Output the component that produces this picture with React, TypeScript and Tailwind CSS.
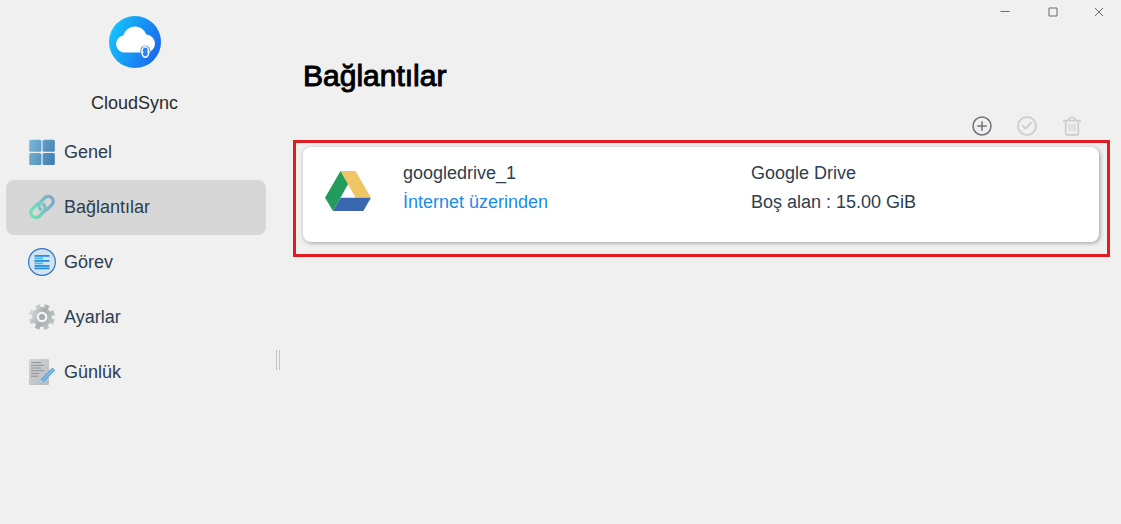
import { Check } from "lucide-react";

function CloudLogo() {
  return (
    <svg viewBox="0 0 52 52" className="size-[52px]" aria-hidden="true">
      <defs>
        <linearGradient id="logo" x1="0" y1="0.3" x2="1" y2="0.7">
          <stop offset="0" stopColor="#15c4fb" />
          <stop offset="1" stopColor="#1a66ee" />
        </linearGradient>
      </defs>
      <circle cx="26" cy="26" r="26" fill="url(#logo)" />
      <path
        d="M15.5 36.5a8.5 8.5 0 0 1-1.2-16.9A12 12 0 0 1 37.3 18.6a9 9 0 0 1 1 17.9z"
        fill="#fff"
      />
      <ellipse cx="36.3" cy="36" rx="5" ry="6.6" fill="#2a86ee" />
      <ellipse cx="36.3" cy="36" rx="3.4" ry="5.2" fill="none" stroke="#fff" strokeWidth="1.6" />
      <path d="M32 34.2v3.6M40.600 34.200v3.600" stroke="#2a86ee" strokeWidth="0.8" />
      <path d="M31 36.600h4l-2-2.400zM41.600 35.400h-4l2 2.400z" fill="#fff" />
    </svg>
  );
}

function GridIcon() {
  return (
    <svg viewBox="0 0 28 28" className="size-7" aria-hidden="true">
      <defs>
        <linearGradient id="grid" gradientUnits="userSpaceOnUse" x1="1" y1="8" x2="27" y2="20">
          <stop offset="0" stopColor="#76b5d6" />
          <stop offset="1" stopColor="#427fb4" />
        </linearGradient>
      </defs>
      <g fill="url(#grid)">
        <rect x="1.2" y="1.7" width="12.2" height="12" rx="1.5" />
        <rect x="14.6" y="1.7" width="12.2" height="12" rx="1.5" />
        <rect x="1.2" y="15" width="12.2" height="12" rx="1.5" />
        <rect x="14.6" y="15" width="12.2" height="12" rx="1.5" />
      </g>
    </svg>
  );
}

function ChainIcon() {
  return (
    <svg viewBox="0 0 28 28" className="size-7" aria-hidden="true">
      <defs>
        <linearGradient id="chain" gradientUnits="userSpaceOnUse" x1="3" y1="16" x2="25" y2="12">
          <stop offset="0" stopColor="#72dfb8" />
          <stop offset="1" stopColor="#7ba9cb" />
        </linearGradient>
      </defs>
      <g fill="none" stroke="url(#chain)" strokeWidth="3.4" strokeLinecap="round">
        <path d="M12.6 16.4a5 5 0 0 1-.4-7l5-5a5 5 0 0 1 7 7l-4.500 4.500a4.600 4.600 0 0 1-1.500 1" />
        <path d="M15.400 11.600a5 5 0 0 1 .4 7l-5 5a5 5 0 0 1-7-7l4.500-4.500a4.600 4.600 0 0 1 1.500-1" />
      </g>
    </svg>
  );
}

function TaskIcon() {
  return (
    <svg viewBox="0 0 28 28" className="size-7" aria-hidden="true">
      <circle cx="14" cy="14" r="13.4" fill="#d5e3f1" stroke="#2a74cd" strokeWidth="1.2" />
      <g fill="#2590dc">
        <rect x="6.500" y="7" width="15" height="1.800" />
        <rect x="6.500" y="12" width="15" height="1.800" />
        <rect x="6.500" y="17" width="15" height="1.800" />
        <rect x="6.500" y="19.500" width="15" height="1.800" />
      </g>
      <g fill="#46baf2">
        <rect x="6.500" y="9.500" width="8.500" height="1.800" />
        <rect x="6.500" y="14.500" width="8.500" height="1.800" />
      </g>
    </svg>
  );
}

function GearIcon() {
  return (
    <svg viewBox="0 0 28 28" className="size-7" aria-hidden="true">
      <defs>
        <linearGradient id="gear" gradientUnits="userSpaceOnUse" x1="2" y1="10" x2="26" y2="18">
          <stop offset="0" stopColor="#d5d9d9" />
          <stop offset="0.5" stopColor="#a9b0b1" />
          <stop offset="1" stopColor="#bcc3c5" />
        </linearGradient>
      </defs>
      {/* the dashes on the outer stroke are the eight teeth */}
      <circle cx="14" cy="14" r="10" fill="url(#gear)" />
      <circle
        cx="14"
        cy="14"
        r="11"
        fill="none"
        stroke="url(#gear)"
        strokeWidth="4"
        strokeDasharray="4.64 4"
        transform="rotate(10.5 14 14)"
      />
      <circle cx="14" cy="14" r="4.2" fill="#a3adb0" stroke="#f3f4f4" strokeWidth="2.2" />
    </svg>
  );
}

function LogIcon() {
  return (
    <svg viewBox="0 0 28 28" className="size-7" aria-hidden="true">
      <defs>
        <linearGradient id="sheet" x1="0" y1="0" x2="1" y2="1">
          <stop offset="0" stopColor="#d2d4d6" />
          <stop offset="1" stopColor="#b9bcbf" />
        </linearGradient>
      </defs>
      <rect x="1" y="1" width="20" height="26" rx="1" fill="url(#sheet)" />
      <path d="M3 4.500h10M3 7.300h13M3 10h10M3 12.700h13M3 15.400h8M3 18.200h7" stroke="#909396" strokeWidth="1" />
      <path d="M11 26l1.500-4.500L24.300 9.500l3 2.800L15.500 24.300z" fill="#63a8dc" />
      <path d="M14 22.800L25.800 10.900" stroke="#a3d0f1" strokeWidth="1" />
      <path d="M11 26l1.500-4.500 3 2.800z" fill="#a8d3ee" />
    </svg>
  );
}

function DriveLogo() {
  return (
    <svg viewBox="0 0 46 40" className="h-10 w-[46px]" aria-hidden="true">
      <path d="M15.500 0h15L46 26.700H30.700z" fill="#f0c566" />
      <path d="M15.500 0L0 26.700 8 40l15-26.700z" fill="#239b5a" />
      <path d="M15.500 26.700H46L38.300 40H8z" fill="#3b67b1" />
    </svg>
  );
}

function TrashIcon() {
  return (
    <svg viewBox="0 0 20 20" className="size-5" fill="none" stroke="currentColor" strokeWidth="1.8" aria-hidden="true">
      <path d="M1 4.700h18M6.500 4.500a3.500 3.200 0 0 1 7 0" />
      <path d="M3.700 4.700v12.300a2 2 0 0 0 2 2h8.600a2 2 0 0 0 2-2V4.700" />
      <path d="M7.300 8.200v7M10 8.200v7M12.700 8.200v7" strokeWidth="1.300" />
    </svg>
  );
}

const navItems = [
  { label: "Genel", icon: GridIcon },
  { label: "Bağlantılar", icon: ChainIcon, active: true },
  { label: "Görev", icon: TaskIcon },
  { label: "Ayarlar", icon: GearIcon },
  { label: "Günlük", icon: LogIcon },
];

function Sidebar() {
  return (
    <aside className="flex w-[272px] shrink-0 flex-col px-1.5 pt-4">
      <div className="flex w-[257px] flex-col items-center gap-[23px]">
        <CloudLogo />
        <span className="leading-6 text-[#2b2b2b]">CloudSync</span>
      </div>
      <nav className="mt-[10px]">
        {navItems.map(({ label, icon: Icon, active }) => (
          <a
            key={label}
            href="#"
            aria-current={active ? "page" : undefined}
            className={`flex h-[55px] items-center gap-2 rounded-lg pb-0.5 pl-[22px] ${active ? "bg-[#d7d7d7]" : ""}`}
          >
            <Icon />
            {label}
          </a>
        ))}
      </nav>
    </aside>
  );
}

function WindowControls() {
  return (
    <div className="flex h-6 justify-end text-[#6b6b6b]">
      <button aria-label="Küçült" className="grid w-12 place-items-center">
        <svg viewBox="0 0 10 10" className="size-2.5" stroke="currentColor">
          <path d="M0.500 4.500h9" />
        </svg>
      </button>
      <button aria-label="Ekranı kapla" className="grid w-12 place-items-center">
        <svg viewBox="0 0 10 10" className="size-2.5" fill="none" stroke="currentColor">
          <path d="M1 1h8v8h-8z" />
        </svg>
      </button>
      <button aria-label="Kapat" className="grid w-11 place-items-center">
        <svg viewBox="0 0 10 10" className="size-2.5" stroke="currentColor">
          <path d="M1 1l8 8M9 1l-8 8" />
        </svg>
      </button>
    </div>
  );
}

export default function App() {
  return (
    <div className="flex min-h-screen bg-[#f0f0f0] font-['Liberation_Sans',Arial,sans-serif] text-lg text-[#2c3e50]">
      <Sidebar />
      <div className="flex w-3 shrink-0 pt-[350px] pl-1">
        <div className="h-5 w-1 border-x border-[#c4c4c4]" />
      </div>
      <main className="min-w-0 flex-1">
        <WindowControls />
        <div className="pr-[11px] pl-[9px]">
          <h1 className="mt-8 ml-[10px] text-3xl leading-10 text-black [-webkit-text-stroke:1px_black]">Bağlantılar</h1>
          <div className="mt-5 mr-7 flex justify-end gap-[25px] text-[#cfcfcf]">
            <button aria-label="Ekle" className="text-[#6f7377]">
              <svg viewBox="0 0 20 20" className="size-5" fill="none" stroke="currentColor" strokeWidth="1.5">
                <circle cx="10" cy="10" r="9" />
                <path d="M5.200 10h9.600M10 5.200v9.600" />
              </svg>
            </button>
            <button aria-label="Doğrula" disabled className="grid size-5 place-items-center rounded-full border-2 border-[#cfcfcf]">
              <Check size={12} strokeWidth={4} />
            </button>
            <button aria-label="Sil" disabled>
              <TrashIcon />
            </button>
          </div>
          <div className="mt-1 border-3 border-[#e31b23] pt-1 pr-2 pb-3 pl-[7px]">
            <section className="flex h-[95px] rounded-lg bg-white pl-[22px] shadow-[1px_1px_4px_rgba(0,0,0,0.35)]">
              <div className="w-[78px] pt-6">
                <DriveLogo />
              </div>
              <div className="grid flex-1 grid-cols-2 content-start pt-3 leading-[29px]">
                <span>googledrive_1</span>
                <span>Google Drive</span>
                <a href="#" className="text-[#1a8ceb]">İnternet üzerinden</a>
                <span>Boş alan : 15.00 GiB</span>
              </div>
            </section>
          </div>
        </div>
      </main>
    </div>
  );
}
